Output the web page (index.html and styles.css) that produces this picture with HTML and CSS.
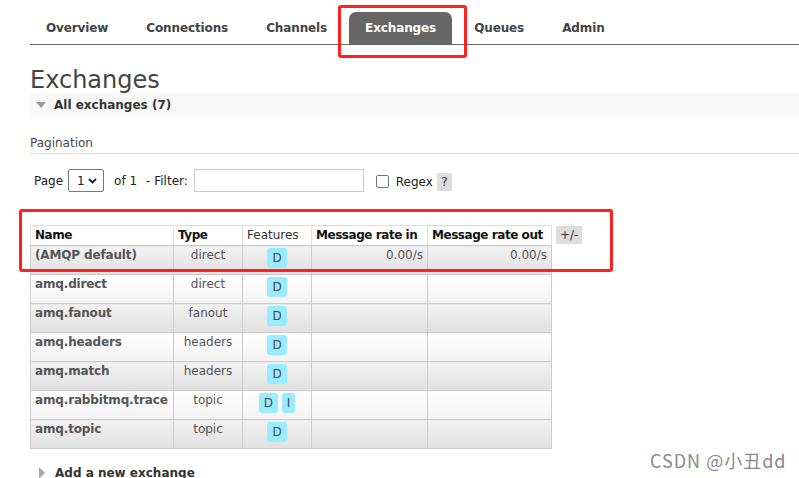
FILE: index.html
```html
<!DOCTYPE html>
<html lang="en">
<head>
<meta charset="utf-8">
<title>RabbitMQ Management - Exchanges</title>
<link rel="stylesheet" href="styles.css">
</head>
<body>
<div class="page">
  <ul class="nav">
    <li>Overview</li>
    <li>Connections</li>
    <li>Channels</li>
    <li class="active">Exchanges</li>
    <li>Queues</li>
    <li>Admin</li>
  </ul>

  <h1>Exchanges</h1>

  <div class="section-head"><span class="tri-down"></span>All exchanges (7)</div>

  <h3 class="subhead">Pagination</h3>
  <div class="pager">
    <span>Page</span>
    <span class="select">1<svg class="chev" width="9" height="6" viewBox="0 0 9 6"><path d="M1 1 L4.5 4.5 L8 1" fill="none" stroke="#222" stroke-width="1.8"/></svg></span>
    <span class="of">of 1</span>
    <span class="filter-label">- Filter:</span>
    <span class="input"></span>
    <span class="checkbox"></span>
    <span class="regex">Regex</span>
    <span class="help">?</span>
  </div>

  <div class="table-wrap">
    <table class="list">
      <thead>
        <tr>
          <th class="c-name">Name</th>
          <th class="c-type">Type</th>
          <th class="c-feat">Features</th>
          <th class="c-in">Message rate in</th>
          <th class="c-out">Message rate out</th>
        </tr>
      </thead>
      <tbody>
        <tr class="alt1">
          <td class="name">(AMQP default)</td>
          <td class="type">direct</td>
          <td class="feat"><span class="badge">D</span></td>
          <td class="rate">0.00/s</td>
          <td class="rate">0.00/s</td>
        </tr>
        <tr class="alt2">
          <td class="name">amq.direct</td>
          <td class="type">direct</td>
          <td class="feat"><span class="badge">D</span></td>
          <td class="rate"></td>
          <td class="rate"></td>
        </tr>
        <tr class="alt1">
          <td class="name">amq.fanout</td>
          <td class="type">fanout</td>
          <td class="feat"><span class="badge">D</span></td>
          <td class="rate"></td>
          <td class="rate"></td>
        </tr>
        <tr class="alt2">
          <td class="name">amq.headers</td>
          <td class="type">headers</td>
          <td class="feat"><span class="badge">D</span></td>
          <td class="rate"></td>
          <td class="rate"></td>
        </tr>
        <tr class="alt1">
          <td class="name">amq.match</td>
          <td class="type">headers</td>
          <td class="feat"><span class="badge">D</span></td>
          <td class="rate"></td>
          <td class="rate"></td>
        </tr>
        <tr class="alt2">
          <td class="name">amq.rabbitmq.trace</td>
          <td class="type">topic</td>
          <td class="feat"><span class="badge">D</span> <span class="badge">I</span></td>
          <td class="rate"></td>
          <td class="rate"></td>
        </tr>
        <tr class="alt1">
          <td class="name">amq.topic</td>
          <td class="type">topic</td>
          <td class="feat"><span class="badge">D</span></td>
          <td class="rate"></td>
          <td class="rate"></td>
        </tr>
      </tbody>
    </table>
    <span class="plusminus">+/-</span>
  </div>

  <div class="section-head closed"><span class="tri-right"></span>Add a new exchange</div>
</div>

<div class="mark mark-tab"></div>
<div class="mark mark-table"></div>
<div class="watermark">CSDN @小丑dd</div>
</body>
</html>
```

FILE: styles.css
```css
html, body {
  margin: 0;
  padding: 0;
  overflow: hidden;
  background: #fff;
}

body {
  font-family: "DejaVu Sans", Verdana, sans-serif;
  font-size: 12px;
  color: #484848;
  position: relative;
  height: 478px;
}

.page {
  padding-left: 30px;
}

/* ---------- navigation tabs ---------- */
.nav {
  list-style: none;
  margin: 12px 0 0;
  padding: 0;
  display: flex;
  gap: 6px;
  border-bottom: 1px solid #666;
}

.nav li {
  padding: 0 16px;
  line-height: 32px;
  font-weight: bold;
  color: #444;
  letter-spacing: -0.12px;
  border-radius: 7px 7px 0 0;
}

.nav li.active {
  background: #666;
  color: #fff;
}

/* ---------- heading ---------- */
h1 {
  margin: 22px 0 0;
  font-size: 24px;
  line-height: 26px;
  font-weight: normal;
  color: #444;
}

/* ---------- section headers ---------- */
.section-head {
  display: flex;
  align-items: center;
  height: 24px;
  padding-left: 6px;
  background: #f8f8f8;
  font-weight: bold;
  color: #333;
}

.section-head.closed {
  background: #fff;
  margin-top: 12px;
  padding-left: 9px;
}

.tri-down {
  width: 0;
  height: 0;
  border-left: 5.5px solid transparent;
  border-right: 5.5px solid transparent;
  border-top: 6px solid #999;
  margin-right: 8px;
}

.tri-right {
  width: 0;
  height: 0;
  border-top: 6px solid transparent;
  border-bottom: 6px solid transparent;
  border-left: 6px solid #aaa;
  margin-right: 10px;
}

/* ---------- pagination ---------- */
.subhead {
  margin: 18px 0 0;
  padding-bottom: 2px;
  font-size: 12px;
  line-height: 16px;
  font-weight: normal;
  color: #484848;
  border-bottom: 1px solid #ddd;
}

.pager {
  display: flex;
  align-items: center;
  height: 23px;
  margin-top: 15px;
  padding-left: 4px;
  color: #222;
}

.select {
  box-sizing: border-box;
  display: flex;
  align-items: center;
  justify-content: space-between;
  width: 36px;
  height: 23px;
  margin: 0 10px 0 5px;
  padding: 0 6px 0 8px;
  border: 1px solid #767676;
  border-radius: 2px;
  color: #222;
}

.filter-label {
  margin-left: 9px;
}

.input {
  box-sizing: border-box;
  width: 170px;
  height: 23px;
  margin-left: 6px;
  border: 1px solid #c8c8c8;
}

.checkbox {
  box-sizing: border-box;
  width: 13px;
  height: 13px;
  margin-left: 12px;
  margin-top: 2px;
  border: 1px solid #767676;
  border-radius: 2px;
}

.regex {
  margin-left: 7px;
  margin-top: 2px;
}

.help {
  width: 15px;
  height: 18px;
  line-height: 18px;
  margin-left: 4px;
  margin-top: 2px;
  text-align: center;
  background: #ddd;
  color: #333;
}

/* ---------- table ---------- */
.table-wrap {
  display: flex;
  align-items: flex-start;
  gap: 4px;
  margin-top: 33px;
}

table.list {
  border-collapse: collapse;
  table-layout: fixed;
  width: 521px;
  border: 1px solid #ccc;
}

.c-name { width: 143px; }
.c-type { width: 69px; }
.c-feat { width: 69px; }
.c-in   { width: 116px; }
.c-out  { width: 124px; }

table.list th {
  box-sizing: border-box;
  padding: 2px 4px;
  line-height: 15px;
  text-align: left;
  font-weight: bold;
  color: #111;
  background: #fff;
  border: 1px solid #ddd;
  border-bottom-color: #ccc;
  white-space: nowrap;
  overflow: visible;
  letter-spacing: -0.45px;
}

table.list th.c-feat {
  font-weight: normal;
  color: #333;
  letter-spacing: 0;
}

table.list td {
  padding: 1px 4px 6px;
  line-height: 16px;
  vertical-align: top;
  border: 1px solid #ccc;
  white-space: nowrap;
  overflow: visible;
  color: #555;
}

tr.alt1 td {
  background: linear-gradient(#f2f2f2, #e0e0e0);
}

tr.alt2 td {
  background: linear-gradient(#fefefe, #f3f3f3);
}

td.name {
  font-weight: bold;
  color: #111;
  letter-spacing: -0.15px;
}

td.type,
td.feat {
  text-align: center;
}

td.rate {
  text-align: right;
  padding-right: 5px;
}

.badge {
  display: inline-block;
  vertical-align: top;
  margin-top: 1px;
  height: 20px;
  line-height: 20px;
  padding: 0 5px;
  background: #99ebff;
  border-radius: 3px;
  color: #484848;
}

.plusminus {
  margin-top: 1px;
  padding: 0 4px;
  line-height: 18px;
  background: #ddd;
  color: #333;
}

/* ---------- annotation overlays ---------- */
.mark {
  position: absolute;
  box-sizing: border-box;
  border: 3px solid #ff2020;
  border-radius: 3px;
}

.mark-tab {
  left: 338px;
  top: 5px;
  width: 129px;
  height: 53px;
}

.mark-table {
  left: 19px;
  top: 209px;
  width: 594px;
  height: 63px;
}

.watermark {
  position: absolute;
  left: 650px;
  top: 447px;
  font-family: "Noto Sans CJK SC", "Noto Sans", sans-serif;
  font-size: 18px;
  line-height: 26px;
  letter-spacing: 1px;
  color: #8a8a8a;
  text-shadow: 0 0 2px #fff;
}
```
